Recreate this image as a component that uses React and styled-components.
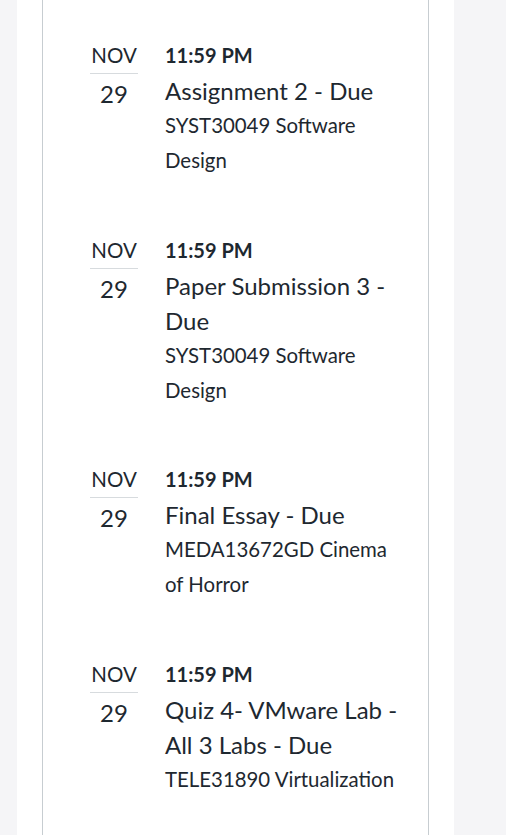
import React from 'react';
import styled, {createGlobalStyle} from 'styled-components';

const GlobalStyle = createGlobalStyle`
  html, body {
    margin: 0;
    padding: 0;
    background: #f5f5f7;
  }
  body {
    font-family: Lato, "Open Sans", sans-serif;
    color: #1e2830;
  }
`;

const Page = styled.div`
  display: flex;
  width: 506px;
  height: 835px;
  overflow: hidden;
  background: #f5f5f7;
`;

const Main = styled.div`
  margin-left: 17px;
  width: 437px;
  background: #ffffff;
  padding-left: 25px;
  box-sizing: border-box;
`;

const Card = styled.div`
  width: 387px;
  min-height: 100%;
  box-sizing: border-box;
  border-left: 1px solid #c7cdd1;
  border-right: 1px solid #c7cdd1;
  padding: 37px 23px 0 47px;
`;

const Item = styled.div`
  display: flex;
  gap: 27px;
  padding-bottom: 53.5px;
`;

const DateCol = styled.div`
  width: 48px;
  flex: none;
  text-align: center;
`;

const Month = styled.div`
  font-size: 20.5px;
  line-height: 36px;
  border-bottom: 1px solid #d7dbde;
  text-transform: uppercase;
`;

const Day = styled.div`
  font-size: 24px;
  line-height: 40px;
`;

const Details = styled.div`
  flex: 1;
  min-width: 0;
`;

const Time = styled.div`
  font-size: 20px;
  font-weight: 700;
  line-height: 36px;
`;

const Title = styled.div`
  font-size: 24px;
  line-height: 35px;
`;

const Course = styled.div`
  font-size: 20.4px;
  line-height: 35px;
`;

const items = [
  {title: 'Assignment 2 - Due', course: 'SYST30049 Software Design'},
  {title: 'Paper Submission 3 - Due', course: 'SYST30049 Software Design'},
  {title: 'Final Essay - Due', course: 'MEDA13672GD Cinema of Horror'},
  {title: 'Quiz 4- VMware Lab - All 3 Labs - Due', course: 'TELE31890 Virtualization'},
];

export default function App() {
  return (
    <>
      <GlobalStyle />
      <Page>
        <Main>
          <Card>
            {items.map((item, i) => (
              <Item key={i}>
                <DateCol>
                  <Month>Nov</Month>
                  <Day>29</Day>
                </DateCol>
                <Details>
                  <Time>11:59 PM</Time>
                  <Title>{item.title}</Title>
                  <Course>{item.course}</Course>
                </Details>
              </Item>
            ))}
          </Card>
        </Main>
      </Page>
    </>
  );
}
